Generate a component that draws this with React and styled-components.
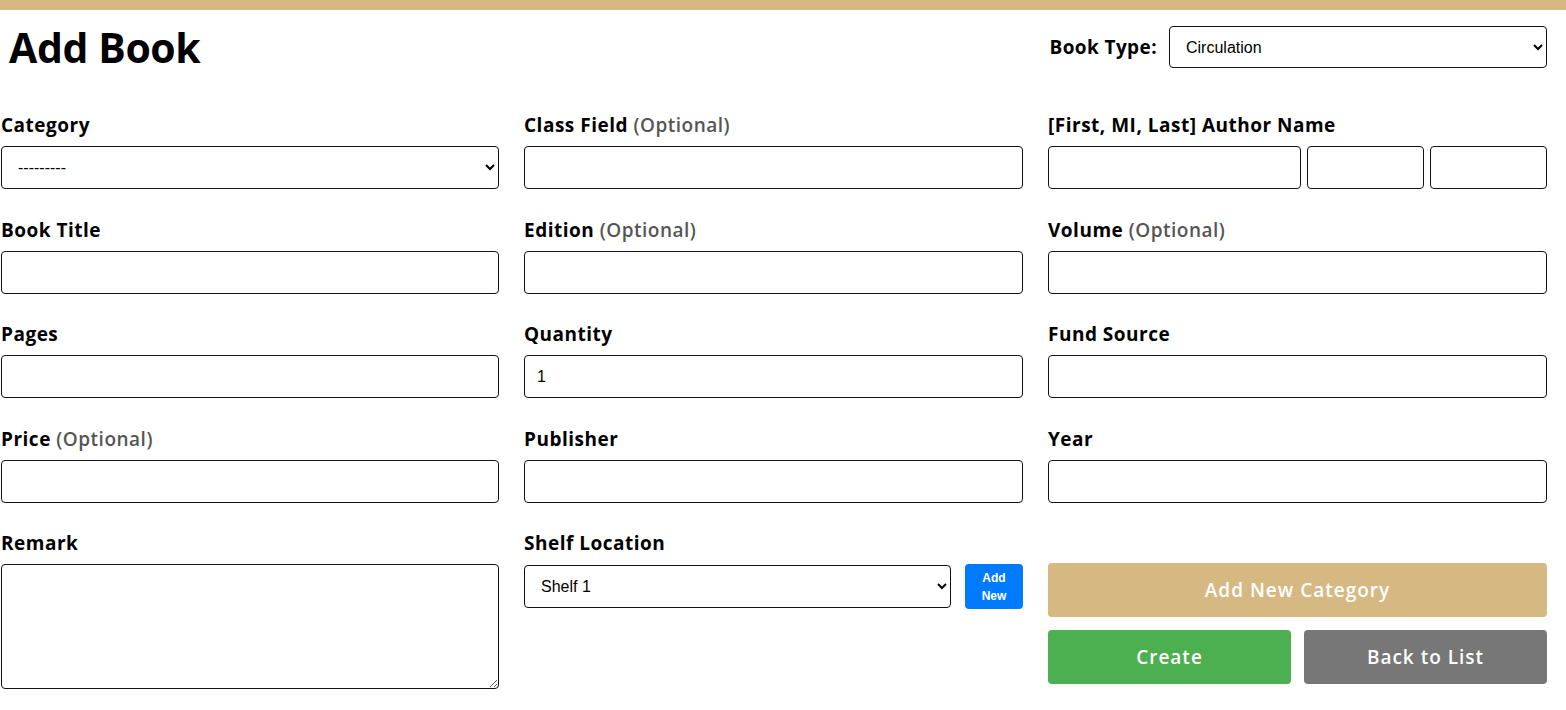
import React from "react";
import styled, { createGlobalStyle } from "styled-components";

const GlobalStyle = createGlobalStyle`
  body {
    margin: 0;
    background: #fff;
    font-family: "Open Sans", "Liberation Sans", sans-serif;
    color: #000;
  }
  * { box-sizing: border-box; }
`;

const TopBar = styled.div`
  height: 10px;
  background: #d5b882;
`;

const Page = styled.div`
  width: 1547px;
  padding-left: 1px;
`;

const Header = styled.div`
  height: 74px;
  display: flex;
  align-items: center;
  justify-content: space-between;
`;

const Title = styled.h1`
  margin: 0 0 0 8px;
  font-size: 41px;
  font-weight: 700;
  letter-spacing: -0.4px;
`;

const TypeBox = styled.div`
  display: flex;
  align-items: center;
  gap: 12px;
`;

const TypeLabel = styled.span`
  font-size: 19px;
  font-weight: 700;
  letter-spacing: 0.4px;
`;

const Grid = styled.div`
  display: grid;
  grid-template-columns: 498px 499px 499px;
  column-gap: 25px;
  row-gap: 27.5px;
  margin-top: 28px;
`;

const Field = styled.div`
  display: flex;
  flex-direction: column;
  padding-top: ${(p) => p.$offset || 0}px;
`;

const Label = styled.label`
  font-size: 19px;
  line-height: 26px;
  font-weight: 700;
  letter-spacing: 0.5px;
  margin-bottom: 8px;
`;

const Optional = styled.span`
  color: #555;
  font-weight: 600;
`;

const Input = styled.input`
  height: 43px;
  width: 100%;
  border: 1px solid #111;
  border-radius: 4px;
  padding: 0 12px;
  font-family: "Liberation Sans", Arial, sans-serif;
  font-size: 16px;
  background: #fff;
`;

const Select = styled.select`
  height: ${(p) => p.$h || 43}px;
  width: ${(p) => p.$w || "100%"};
  flex: ${(p) => (p.$w ? "none" : 1)};
  min-width: 0;
  border: 1px solid #111;
  border-radius: 4px;
  padding: 0 8px 0 12px;
  font-family: "Liberation Sans", Arial, sans-serif;
  font-size: 16px;
  background: #fff;
  color: #000;
`;

const Textarea = styled.textarea`
  height: 125px;
  width: 100%;
  border: 1px solid #111;
  border-radius: 4px;
  padding: 8px 12px;
  font-family: "Liberation Sans", Arial, sans-serif;
  font-size: 16px;
`;

const NameRow = styled.div`
  display: grid;
  grid-template-columns: 253px 1fr 1fr;
  gap: 6px;
`;

const ShelfRow = styled.div`
  display: flex;
  align-items: center;
  gap: 14px;
`;

const SmallButton = styled.button`
  flex: none;
  width: 58px;
  height: 45px;
  border: none;
  border-radius: 4px;
  background: #007bff;
  color: #fff;
  font-family: "Liberation Sans", Arial, sans-serif;
  font-weight: 700;
  font-size: 12px;
  line-height: 18px;
  padding: 0;
`;

const Actions = styled.div`
  display: grid;
  grid-template-columns: 1fr 1fr;
  gap: 13px;
`;

const ActionButton = styled.button`
  grid-column: ${(p) => (p.$wide ? "1 / span 2" : "auto")};
  height: 54px;
  border: none;
  border-radius: 4px;
  background: ${(p) => p.$bg};
  color: #fff;
  font-family: "Open Sans", sans-serif;
  font-size: 19px;
  font-weight: 600;
  letter-spacing: 1px;
`;

const Opt = () => <Optional>(Optional)</Optional>;

export default function App() {
  return (
    <>
      <GlobalStyle />
      <TopBar />
      <Page>
        <Header>
          <Title>Add Book</Title>
          <TypeBox>
            <TypeLabel>Book Type:</TypeLabel>
            <Select $w="378px" $h={42} defaultValue="Circulation">
              <option>Circulation</option>
              <option>Reference</option>
            </Select>
          </TypeBox>
        </Header>

        <Grid>
          <Field>
            <Label>Category</Label>
            <Select defaultValue="">
              <option value="">---------</option>
            </Select>
          </Field>
          <Field>
            <Label>Class Field <Opt /></Label>
            <Input />
          </Field>
          <Field>
            <Label>[First, MI, Last] Author Name</Label>
            <NameRow>
              <Input />
              <Input />
              <Input />
            </NameRow>
          </Field>

          <Field>
            <Label>Book Title</Label>
            <Input />
          </Field>
          <Field>
            <Label>Edition <Opt /></Label>
            <Input />
          </Field>
          <Field>
            <Label>Volume <Opt /></Label>
            <Input />
          </Field>

          <Field>
            <Label>Pages</Label>
            <Input />
          </Field>
          <Field>
            <Label>Quantity</Label>
            <Input defaultValue="1" />
          </Field>
          <Field>
            <Label>Fund Source</Label>
            <Input />
          </Field>

          <Field>
            <Label>Price <Opt /></Label>
            <Input />
          </Field>
          <Field>
            <Label>Publisher</Label>
            <Input />
          </Field>
          <Field>
            <Label>Year</Label>
            <Input />
          </Field>

          <Field>
            <Label>Remark</Label>
            <Textarea />
          </Field>
          <Field>
            <Label>Shelf Location</Label>
            <ShelfRow>
              <Select defaultValue="Shelf 1">
                <option>Shelf 1</option>
                <option>Shelf 2</option>
              </Select>
              <SmallButton>
                Add
                <br />
                New
              </SmallButton>
            </ShelfRow>
          </Field>
          <Field $offset={33}>
            <Actions>
              <ActionButton $wide $bg="#d5b882">Add New Category</ActionButton>
              <ActionButton $bg="#4caf50">Create</ActionButton>
              <ActionButton $bg="#777777">Back to List</ActionButton>
            </Actions>
          </Field>
        </Grid>
      </Page>
    </>
  );
}
